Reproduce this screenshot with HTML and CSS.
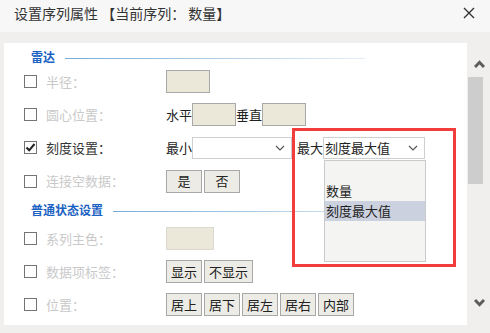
FILE: index.html
```html
<!DOCTYPE html>
<html lang="zh-CN">
<head>
    <meta charset="UTF-8">
    <meta name="viewport" content="width=device-width, initial-scale=1.0">
    <link rel="stylesheet" href="styles.css">
    <title>设置序列属性</title>
</head>
<body>
    <div class="dialog">
        <div class="titlebar">
            <span class="title">设置序列属性 【当前序列： 数量】</span>
            <svg class="close" width="12" height="12" viewBox="0 0 12 12">
                <path d="M1 1L11 11M11 1L1 11" stroke="#333" stroke-width="1.4" fill="none"/>
            </svg>
        </div>

        <div class="main">
            <div class="panel">
                <div class="section first">
                    <span class="section-name">雷达</span>
                    <span class="section-line"></span>
                </div>

                <div class="row">
                    <span class="check"></span>
                    <span class="label off">半径：</span>
                    <div class="controls"><span class="field"></span></div>
                </div>

                <div class="row">
                    <span class="check"></span>
                    <span class="label off">圆心位置：</span>
                    <div class="controls">
                        <span class="word">水平</span><span class="field"></span>
                        <span class="word">垂直</span><span class="field"></span>
                    </div>
                </div>

                <div class="row">
                    <span class="check on">
                        <svg width="11" height="11" viewBox="0 0 11 11"><path d="M1.5 5.5L4.2 8.3L9.5 2" stroke="#222" stroke-width="2" fill="none"/></svg>
                    </span>
                    <span class="label">刻度设置：</span>
                    <div class="controls">
                        <span class="word">最小</span>
                        <div class="select min"><span></span><svg width="10" height="6" viewBox="0 0 10 6"><path d="M1 1L5 5L9 1" stroke="#555" stroke-width="1.2" fill="none"/></svg></div>
                        <span class="word max-word">最大</span>
                        <div class="select max"><span>刻度最大值</span><svg width="10" height="6" viewBox="0 0 10 6"><path d="M1 1L5 5L9 1" stroke="#555" stroke-width="1.2" fill="none"/></svg></div>
                    </div>
                </div>

                <div class="row tall">
                    <span class="check"></span>
                    <span class="label off">连接空数据：</span>
                    <div class="controls buttons">
                        <span class="btn">是</span><span class="btn">否</span>
                    </div>
                </div>

                <div class="section second">
                    <span class="section-name">普通状态设置</span>
                    <span class="section-line"></span>
                </div>

                <div class="row">
                    <span class="check"></span>
                    <span class="label off">系列主色：</span>
                    <div class="controls"><span class="field wide"></span></div>
                </div>

                <div class="row">
                    <span class="check"></span>
                    <span class="label off">数据项标签：</span>
                    <div class="controls buttons">
                        <span class="btn">显示</span><span class="btn">不显示</span>
                    </div>
                </div>

                <div class="row">
                    <span class="check"></span>
                    <span class="label off">位置：</span>
                    <div class="controls buttons">
                        <span class="btn">居上</span><span class="btn">居下</span><span class="btn">居左</span><span class="btn">居右</span><span class="btn">内部</span>
                    </div>
                </div>

                <ul class="dropdown">
                    <li></li>
                    <li>数量</li>
                    <li class="picked">刻度最大值</li>
                </ul>
                <div class="mark"></div>
            </div>

            <div class="scrollbar">
                <div class="arrow up">
                    <svg width="11" height="8" viewBox="0 0 11 8"><path d="M1 7L5.5 2.3L10 7" stroke="#5c5c5c" stroke-width="3" fill="none"/></svg>
                </div>
                <div class="thumb"></div>
                <div class="arrow down">
                    <svg width="11" height="8" viewBox="0 0 11 8"><path d="M1 1L5.5 5.7L10 1" stroke="#5c5c5c" stroke-width="3" fill="none"/></svg>
                </div>
            </div>
        </div>
    </div>
</body>
</html>
```

FILE: styles.css
```css
body {
    margin: 0;
    font-family: "Noto Sans CJK SC", "Microsoft YaHei", sans-serif;
    color: #333;
    background-color: #f0efee;
}

.dialog {
    width: 490px;
    height: 333px;
    display: flex;
    flex-direction: column;
    overflow: hidden;
}

.titlebar {
    height: 32px;
    flex-shrink: 0;
    background-color: #f7f7f7;
    display: flex;
    align-items: center;
    justify-content: space-between;
    padding: 0 15px 0 14px;
    box-sizing: border-box;
}

.title {
    font-size: 14px;
    line-height: 16px;
    color: #333;
    margin-top: -6px;
}

.close {
    margin-top: -7px;
}

.main {
    display: flex;
    padding: 11px 0 0 4px;
    background-color: #f0efee;
}

.panel {
    position: relative;
    width: 463px;
    height: 282px;
    background-color: #fff;
    overflow: hidden;
    font-size: 13px;
}

.section {
    display: flex;
    align-items: center;
    padding-left: 27px;
}

.section.first {
    height: 16px;
    margin-top: 6px;
}

.section.second {
    height: 24px;
}

.section-name {
    color: #1b62c2;
    font-size: 12px;
    font-weight: bold;
    line-height: 14px;
}

.section-line {
    width: 300px;
    height: 1px;
    margin-left: 10px;
    margin-top: 2px;
    background: linear-gradient(to right, #79abd4, #e4eef8);
}

.row {
    height: 33px;
    display: flex;
    align-items: center;
    padding-left: 20px;
}

.row.tall {
    height: 34px;
}

.check {
    width: 11px;
    height: 11px;
    border: 1px solid #747474;
    background-color: #fff;
    display: flex;
    align-items: center;
    justify-content: center;
    flex-shrink: 0;
}

.label {
    width: 120px;
    margin-left: 9px;
    line-height: 16px;
    color: #333;
}

.label.off {
    color: #c9c9c9;
}

.controls {
    display: flex;
    align-items: center;
}

.word {
    width: 26px;
    line-height: 16px;
    color: #222;
}

.field {
    width: 42px;
    height: 21px;
    background-color: #ebe8da;
    border: 1px solid #a9a9a9;
}

.field.wide {
    width: 46px;
    border-color: #dcdad0;
}

.select {
    height: 20px;
    border: 1px solid #cfcfcf;
    background-color: #fff;
    display: flex;
    align-items: center;
    justify-content: space-between;
    padding: 0 6px 0 1px;
    line-height: 16px;
    color: #222;
}

.select.min {
    width: 91px;
}

.select.max {
    width: 93px;
}

.max-word {
    margin-left: 5px;
}

.buttons {
    gap: 2px;
}

.btn {
    min-width: 26px;
    height: 21px;
    padding: 0 4px;
    border: 1px solid #a8a8a8;
    background-color: #ecebe5;
    color: #222;
    display: flex;
    align-items: center;
    justify-content: center;
    line-height: 16px;
}

.dropdown {
    position: absolute;
    left: 320px;
    top: 117px;
    width: 100px;
    height: 100px;
    margin: 0;
    padding: 0;
    list-style: none;
    background-color: #f4f4f2;
    border: 1px solid #cacaca;
}

.dropdown li {
    height: 20px;
    line-height: 20px;
    padding-left: 1px;
    color: #222;
}

.dropdown li.picked {
    background-color: #ccd1e0;
}

.mark {
    position: absolute;
    left: 288px;
    top: 85px;
    width: 158px;
    height: 133px;
    border: 3px solid #f23d3d;
}

.scrollbar {
    width: 23px;
    height: 282px;
    display: flex;
    flex-direction: column;
}

.arrow {
    display: flex;
    justify-content: center;
    padding-left: 2px;
}

.arrow.up {
    height: 34px;
    align-items: flex-start;
    padding-top: 17px;
    box-sizing: border-box;
}

.thumb {
    width: 15px;
    height: 107px;
    margin-left: 1px;
    background-color: #cdcdcd;
}

.arrow.down {
    margin-top: auto;
    height: 27px;
    padding-bottom: 18px;
    align-items: flex-end;
    box-sizing: border-box;
}
```
